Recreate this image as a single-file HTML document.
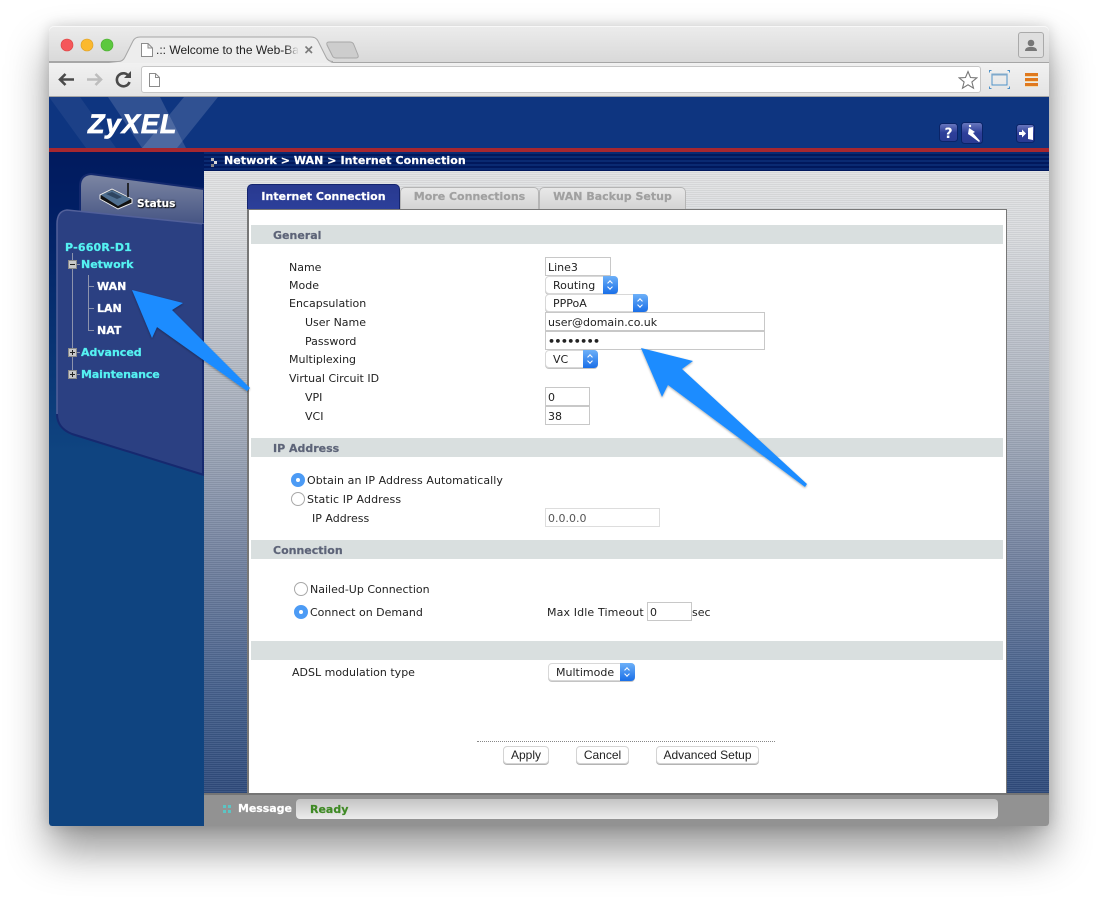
<!DOCTYPE html>
<html><head><meta charset="utf-8"><title>Welcome</title>
<style>
html,body{margin:0;padding:0;background:#fff}
body{width:1097px;height:899px;position:relative;overflow:hidden;font-family:"DejaVu Sans",sans-serif;font-size:11px;color:#222}
#win{position:absolute;left:49px;top:26px;width:1000px;height:800px;border-radius:5px 5px 3px 3px;box-shadow:0 24px 42px rgba(0,0,0,.42),0 0 14px rgba(0,0,0,.16)}
.a{position:absolute;white-space:nowrap}
.t{position:absolute;white-space:nowrap;line-height:14px;height:14px;margin-top:1px}
.b{font-weight:bold;-webkit-text-stroke:.2px currentColor}
.sec{position:absolute;left:251px;width:752px;height:19px;background:#d9dfdf;color:#5d6478;font-weight:bold;line-height:21px;text-indent:22px;-webkit-text-stroke:.2px #5d6478}
.in{position:absolute;box-sizing:border-box;border:1px solid #c8c8c8;background:#fff;padding-left:2px;line-height:19px;height:19px;color:#222;white-space:nowrap;overflow:hidden}
.sel{position:absolute;box-sizing:border-box;height:18px;background:#fff;border:1px solid #d8d8d8;border-radius:4px;line-height:18px;padding-left:7px;color:#222;white-space:nowrap;box-shadow:0 1px 0 #c4c4c4}
.sel i{position:absolute;right:-1px;top:-1px;width:15px;height:18px;border-radius:0 4px 4px 0;background:linear-gradient(#6db0f8,#1a6fe8)}
.sel i:before,.sel i:after{content:"";position:absolute;left:5px;width:4px;height:4px;border-left:1px solid #fff;border-top:1px solid #fff;box-sizing:border-box;transform:rotate(45deg)}
.sel i:before{top:5px}
.sel i:after{top:9px;transform:rotate(225deg)}
.r{position:absolute;width:14px;height:14px;box-sizing:border-box;border-radius:50%;background:#fff;border:1px solid #a8a8a8}
.r.on{background:#4c9bf5;border-color:#4c9bf5}
.r.on:after{content:"";position:absolute;left:4px;top:4px;width:4px;height:4px;border-radius:50%;background:#fff}
.btn{position:absolute;box-sizing:border-box;top:746px;height:18px;background:#fff;border:1px solid #d4d4d4;border-radius:4px;line-height:16px;text-align:center;color:#222;box-shadow:0 1px 0 #b4b4b4;font-family:"Liberation Sans",sans-serif;font-size:12px}
.tree{position:absolute;color:#55f2f2;font-weight:bold;line-height:14px;white-space:nowrap;margin-top:1px;-webkit-text-stroke:.25px currentColor}
.w{color:#fff}
.box{position:absolute;width:9px;height:9px;box-sizing:border-box;background:#c8c8c8;border:1px solid #8a8a8a}
.box:before{content:"";position:absolute;left:1px;top:3px;width:5px;height:1px;background:#222}
.box.p:after{content:"";position:absolute;left:3px;top:1px;width:1px;height:5px;background:#222}
.ln{position:absolute;background:#8c93ad}
.tab{position:absolute;box-sizing:border-box;border-radius:5px 5px 0 0;text-align:center;font-weight:bold;-webkit-text-stroke:.2px currentColor}
</style></head>
<body>
<div id="win"></div>

<!-- browser chrome -->
<div class="a" style="left:49px;top:26px;width:1000px;height:36px;background:linear-gradient(#ececec,#d9d9d9);border-radius:5px 5px 0 0;box-shadow:inset 0 1px 0 #f8f8f8"></div>
<div class="a" style="left:49px;top:62px;width:1000px;height:35px;background:linear-gradient(#f1f1f1,#e4e4e4);box-sizing:border-box;border-top:1px solid #a6a6a6;border-bottom:1px solid #a6a6a6"></div>
<svg class="a" style="left:49px;top:26px" width="320" height="38" viewBox="0 0 320 38">
<path d="M69 36Q74 36 76 31L84 15Q86 11 91 11H262Q267 11 269 15L277 31Q279 36 284 37H60Z" fill="#ededed"/>
<path d="M0 35.500H69Q74 35.500 76 31L84 15Q86 11 91 11H262Q267 11 269 15L277 31Q279 35.500 284 35.500" fill="none" stroke="#a6a6a6"/>
<path d="M280 16H301Q304 16 305 19L309 29Q310 32 307 32H287Q284 32 283 29L278 19Q277 16 280 16Z" fill="#cdcdcd" stroke="#a8a8a8"/>
</svg>
<svg class="a" style="left:60px;top:37px" width="56" height="16"><circle cx="7" cy="8" r="6" fill="#f5575a" stroke="#d9413f" stroke-width=".6"/><circle cx="27" cy="8" r="6" fill="#fbb92e" stroke="#dc9e25" stroke-width=".6"/><circle cx="47" cy="8" r="6" fill="#5cc83f" stroke="#4aa92f" stroke-width=".6"/></svg>
<svg class="a" style="left:140px;top:42px" width="14" height="16"><path d="M1.500 1.500H8L12.500 6V14.500H1.500Z M8 1.500V6H12.500" fill="#fff" stroke="#8c8c8c"/></svg>
<div class="a" style="left:156px;top:43px;width:142px;height:15px;overflow:hidden;font-family:'Liberation Sans',sans-serif;font-size:12px;line-height:15px;color:#222">.:: Welcome to the Web-Based</div>
<div class="a" style="left:285px;top:43px;width:14px;height:15px;background:linear-gradient(90deg,rgba(237,237,237,0),#ededed)"></div>
<svg class="a" style="left:304px;top:45px" width="10" height="10"><path d="M1.500 1.500L8 8M8 1.500L1.500 8" stroke="#7b7b7b" stroke-width="1.600"/></svg>
<div class="a" style="left:1018px;top:32px;width:26px;height:26px;box-sizing:border-box;border:1px solid #aaa;border-radius:3px;background:#dfdfdf"></div>
<svg class="a" style="left:1018px;top:32px" width="26" height="26"><circle cx="13" cy="11" r="3.300" fill="#777"/><path d="M7 19Q7 15.500 11 15H15Q19 15.500 19 19Z" fill="#777"/></svg>

<svg class="a" style="left:56px;top:68px" width="80" height="24" fill="none">
<path d="M18 11.500H4M9.500 6L4 11.500L9.500 17" stroke="#4a4a4a" stroke-width="2.600"/>
<path d="M31 11.500H45M39.500 6L45 11.500L39.500 17" stroke="#bdbdbd" stroke-width="2.600"/>
<path d="M73 8.500A6.500 6.500 0 1 0 73.500 14" stroke="#4a4a4a" stroke-width="2.600"/><path d="M75 3V10H68Z" fill="#4a4a4a"/>
</svg>
<div class="a" style="left:141px;top:66px;width:840px;height:27px;box-sizing:border-box;background:#fff;border:1px solid #c6c6c6;border-radius:3px"></div>
<svg class="a" style="left:148px;top:72px" width="14" height="16"><path d="M1.500 1.500H7.500L11.500 5.500V14.500H1.500Z M7.500 1.500V5.500H11.500" fill="#fff" stroke="#8c8c8c"/></svg>
<svg class="a" style="left:958px;top:70px" width="20" height="20"><path d="M10 1.500L12.500 7.500L18.800 7.900L13.900 12L15.500 18.200L10 14.800L4.500 18.200L6.100 12L1.200 7.900L7.500 7.500Z" fill="#fff" stroke="#777" stroke-width="1.100"/></svg>
<svg class="a" style="left:989px;top:70px" width="21" height="19" fill="none"><rect x="3" y="4" width="15" height="11" stroke="#4f93c9" stroke-width="1"/><rect x="3" y="3.500" width="15" height="2" fill="#7fa9cb"/><path d="M.5 2.500V.5H2.500M18.500 .5H20.500V2.500M.5 16.500V18.500H2.500M20.500 16.500V18.500H18.500" stroke="#4f93c9"/></svg>
<div class="a" style="left:1025px;top:73px;width:13px;height:3px;background:#e0791e;box-shadow:0 1px 0 #f5d9a8"></div>
<div class="a" style="left:1025px;top:78px;width:13px;height:3px;background:#e0791e;box-shadow:0 1px 0 #f5d9a8"></div>
<div class="a" style="left:1025px;top:83px;width:13px;height:3px;background:#e0791e;box-shadow:0 1px 0 #f5d9a8"></div>

<!-- header -->
<div class="a" style="left:49px;top:97px;width:1000px;height:51px;background:#0e3580;overflow:hidden"></div>
<svg class="a" style="left:49px;top:97px" width="190" height="51"><path d="M0 0H31L67 51H37Z" fill="#fff" fill-opacity=".06"/><path d="M59 0H111L137 51H93Z" fill="#fff" fill-opacity=".14"/><path d="M135 0H169L128 51H93Z" fill="#fff" fill-opacity=".14"/></svg>
<div class="a" style="left:88px;top:106px;font-family:'Liberation Sans',sans-serif;font-weight:bold;font-style:italic;font-size:27px;line-height:36px;color:#fff;letter-spacing:1.100px;-webkit-text-stroke:.7px #fff">ZyXEL</div>
<svg class="a" style="left:938px;top:121px" width="100" height="24">
<defs><linearGradient id="ig" x1="0" y1="0" x2="0" y2="1"><stop offset="0" stop-color="#6a79bf"/><stop offset=".5" stop-color="#2e3f9a"/><stop offset="1" stop-color="#2a3a92"/></linearGradient></defs>
<rect x="1.500" y="2.500" width="18" height="18" rx="3" fill="url(#ig)" stroke="#0a2468"/>
<rect x="23.500" y="1.500" width="21" height="21" rx="3" fill="url(#ig)" stroke="#0a2468"/>
<rect x="78.500" y="3.500" width="18" height="18" rx="3" fill="url(#ig)" stroke="#0a2468"/>
<text x="10.500" y="17" text-anchor="middle" font-family="DejaVu Sans" font-weight="bold" font-size="14" fill="#fff">?</text>
<path d="M31 7L34 9L37 11L35 12L42 20L41 21L33 15L30 13Z" fill="#fff"/><circle cx="32" cy="5" r="1.200" fill="#fff"/>
<path d="M90 7L95 6V19L90 18Z" fill="#fff"/><path d="M81 11H84V8.500L88 12.500L84 16.500V14H81Z" fill="#fff"/>
</svg>
<div class="a" style="left:49px;top:148px;width:1000px;height:4px;background:#a6272f"></div>

<!-- sidebar -->
<div class="a" style="left:49px;top:152px;width:155px;height:674px;background:linear-gradient(#011a5e 0,#011f64 60px,#0f4480 300px,#0f4480 100%);border-radius:0 0 0 3px"></div>
<svg class="a" style="left:49px;top:165px" width="156" height="325" viewBox="49 165 156 325">
<defs><linearGradient id="st" x1="0" y1="0" x2="0" y2="1"><stop offset="0" stop-color="#7d87a3"/><stop offset="1" stop-color="#3f4f80"/></linearGradient></defs>
<path d="M80 215V186Q80 175 91 174L204 189V230Z" fill="url(#st)" stroke="#13296e" stroke-width="2"/>
<path d="M57 224Q57 211 67 210L204 224V475L72 434Q57 428 57 414Z" fill="#2b4082"/>
<path d="M57 414V224Q57 211 67 210L204 224" fill="none" stroke="#52609a" stroke-width="1.500"/>
<path d="M57 414Q57 428 72 434L204 475" fill="none" stroke="#16296f" stroke-width="2"/>
<path d="M203 224V475" stroke="#16296f" stroke-width="2"/>
<path d="M100 195L112 189L132 199V203L118 209L100 199Z" fill="#111" stroke="#eee" stroke-width="1"/>
<path d="M101 195L112 190L131 199L118 206Z" fill="#4f6f90"/>
<path d="M106 194L112 192L122 197L117 199Z" fill="#2e4560"/>
<path d="M128 197V183" stroke="#111" stroke-width="1.600"/>
</svg>
<div class="a b" style="left:137px;top:197px;line-height:14px;color:#fff;text-shadow:1px 1px 1px #000,0 0 2px #000;font-size:10.500px">Status</div>

<div class="ln" style="left:72px;top:253px;width:1px;height:122px"></div>
<div class="ln" style="left:88px;top:275px;width:1px;height:55px"></div>
<div class="ln" style="left:88px;top:286px;width:6px;height:1px"></div>
<div class="ln" style="left:88px;top:308px;width:6px;height:1px"></div>
<div class="ln" style="left:88px;top:330px;width:6px;height:1px"></div>
<div class="ln" style="left:76px;top:264px;width:4px;height:1px"></div>
<div class="ln" style="left:76px;top:352px;width:4px;height:1px"></div>
<div class="ln" style="left:76px;top:374px;width:4px;height:1px"></div>
<div class="tree" style="left:65px;top:240px;letter-spacing:.2px">P-660R-D1</div>
<div class="box" style="left:68px;top:260px"></div>
<div class="tree" style="left:81px;top:257px">Network</div>
<div class="tree w" style="left:97px;top:279px">WAN</div>
<div class="tree w" style="left:97px;top:301px">LAN</div>
<div class="tree w" style="left:97px;top:323px">NAT</div>
<div class="box p" style="left:68px;top:348px"></div>
<div class="tree" style="left:81px;top:345px">Advanced</div>
<div class="box p" style="left:68px;top:370px"></div>
<div class="tree" style="left:81px;top:367px;letter-spacing:-.1px">Maintenance</div>

<!-- main area -->
<div class="a" style="left:204px;top:171px;width:845px;height:622px;background:repeating-linear-gradient(rgba(255,255,255,.07) 0 1px,rgba(0,0,0,.05) 1px 2px),linear-gradient(#e2e3e4 0,#dadcdf 60px,#a5adbb 250px,#6f7f9e 400px,#45608c 520px,#2f4b7c 622px)"></div>
<div class="a" style="left:204px;top:152px;width:845px;height:19px;background:repeating-linear-gradient(#0a2a72 0 2px,#01185c 2px 4px)"></div>
<div class="a" style="left:211px;top:158px;width:3px;height:3px;background:#bbb;box-shadow:3px 3px 0 #ddd,0 6px 0 #888"></div>
<div class="a b" style="left:224px;top:154px;line-height:14px;color:#fff;letter-spacing:.06px">Network &gt; WAN &gt; Internet Connection</div>

<div class="a" style="left:247px;top:209px;width:760px;height:584px;box-sizing:border-box;background:#fff;border:1px solid #777;border-width:1px 1px 0 2px"></div>

<div class="tab" style="left:247px;top:184px;width:153px;height:25px;background:linear-gradient(#28398f,#2c3f9a);border:1px solid #14246e;border-bottom:0;color:#fff;line-height:23px">Internet Connection</div>
<div class="tab" style="left:400px;top:187px;width:139px;height:22px;background:linear-gradient(#e8e8e8,#d4d4d4);border:1px solid #b5b5b5;border-bottom:0;color:#a0a0a0;line-height:18px">More Connections</div>
<div class="tab" style="left:539px;top:187px;width:147px;height:22px;background:linear-gradient(#e8e8e8,#d4d4d4);border:1px solid #b5b5b5;border-bottom:0;color:#a0a0a0;line-height:18px">WAN Backup Setup</div>

<div class="sec" style="top:225px">General</div>
<div class="sec" style="top:438px">IP Address</div>
<div class="sec" style="top:540px">Connection</div>
<div class="sec" style="top:641px"></div>

<div class="t" style="left:289px;top:260px">Name</div>
<div class="t" style="left:289px;top:278px">Mode</div>
<div class="t" style="left:289px;top:296px">Encapsulation</div>
<div class="t" style="left:305px;top:315px">User Name</div>
<div class="t" style="left:305px;top:334px">Password</div>
<div class="t" style="left:289px;top:352px">Multiplexing</div>
<div class="t" style="left:289px;top:371px">Virtual Circuit ID</div>
<div class="t" style="left:305px;top:390px">VPI</div>
<div class="t" style="left:305px;top:409px">VCI</div>

<div class="in" style="left:545px;top:257px;width:66px">Line3</div>
<div class="sel" style="left:545px;top:276px;width:73px">Routing<i></i></div>
<div class="sel" style="left:545px;top:294px;width:103px">PPPoA<i></i></div>
<div class="in" style="left:545px;top:312px;width:220px">user@domain.co.uk</div>
<div class="in" style="left:545px;top:331px;width:220px;letter-spacing:-.6px;font-weight:bold">••••••••</div>
<div class="sel" style="left:545px;top:350px;width:53px">VC<i></i></div>
<div class="in" style="left:545px;top:387px;width:45px">0</div>
<div class="in" style="left:545px;top:406px;width:45px">38</div>

<div class="r on" style="left:291px;top:473px"></div>
<div class="t" style="left:307px;top:473px;letter-spacing:.06px">Obtain an IP Address Automatically</div>
<div class="r" style="left:291px;top:492px"></div>
<div class="t" style="left:307px;top:492px;letter-spacing:.12px">Static IP Address</div>
<div class="t" style="left:312px;top:511px">IP Address</div>
<div class="in" style="left:545px;top:508px;width:115px;color:#555;border-color:#ddd">0.0.0.0</div>

<div class="r" style="left:294px;top:582px"></div>
<div class="t" style="left:310px;top:582px">Nailed-Up Connection</div>
<div class="r on" style="left:294px;top:605px"></div>
<div class="t" style="left:310px;top:605px">Connect on Demand</div>
<div class="t" style="left:547px;top:605px;letter-spacing:.13px">Max Idle Timeout</div>
<div class="in" style="left:647px;top:602px;width:45px">0</div>
<div class="t" style="left:692px;top:605px">sec</div>

<div class="t" style="left:292px;top:665px">ADSL modulation type</div>
<div class="sel" style="left:548px;top:663px;width:87px">Multimode<i></i></div>

<div class="a" style="left:477px;top:741px;width:298px;height:0;border-top:1px dotted #888"></div>
<div class="btn" style="left:503px;width:46px">Apply</div>
<div class="btn" style="left:576px;width:53px">Cancel</div>
<div class="btn" style="left:656px;width:103px">Advanced Setup</div>

<!-- message bar -->
<div class="a" style="left:204px;top:793px;width:845px;height:33px;background:#929292;border-top:2px solid #757575;box-sizing:border-box;border-radius:0 0 3px 0"></div>
<div class="a" style="left:223px;top:805px;width:3px;height:3px;background:#5cc4c4;box-shadow:5px 0 0 #5cc4c4,0 5px 0 #5cc4c4,5px 5px 0 #5cc4c4"></div>
<div class="a b" style="left:238px;top:802px;line-height:14px;color:#fff;letter-spacing:-.05px">Message</div>
<div class="a" style="left:296px;top:799px;width:702px;height:20px;background:linear-gradient(#c4c4c4,#ececec);border-radius:4px"></div>
<div class="a b" style="left:310px;top:803px;line-height:14px;color:#3f8a25">Ready</div>

<!-- arrows -->
<svg class="a" style="left:0;top:0;pointer-events:none" width="1097" height="899">
<defs><filter id="sh" x="-20%" y="-20%" width="140%" height="140%"><feDropShadow dx="0" dy="1" stdDeviation="1" flood-color="#000" flood-opacity=".35"/></filter></defs>
<path filter="url(#sh)" d="M132 290L183 303L172 310L250 388L247 391L157 327L152 338Z" fill="#1b8cff"/>
<path filter="url(#sh)" d="M641 348L693 361L682 369L807 484L805 487L668 385L662 397Z" fill="#1b8cff"/>
</svg>
</body></html>
